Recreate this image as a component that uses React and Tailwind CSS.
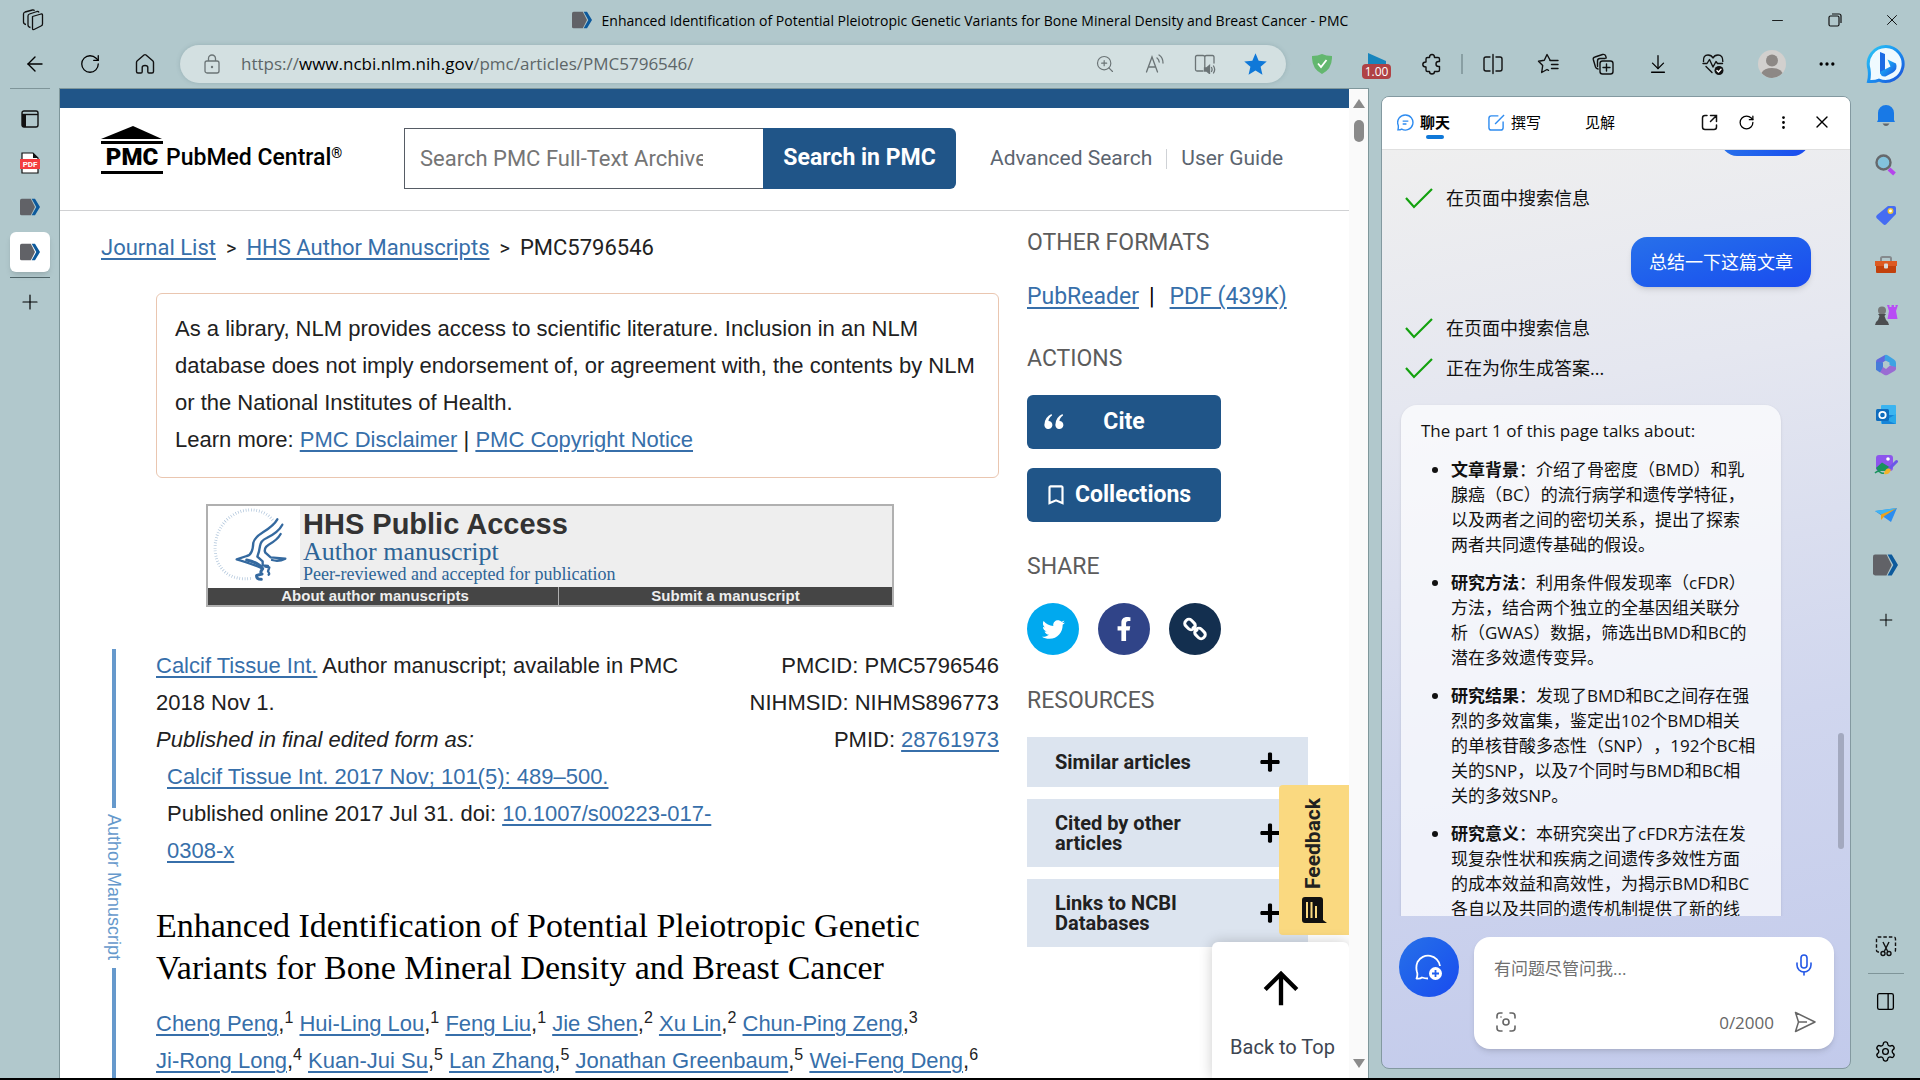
import { useState } from "react";
import {
  ArrowLeft,
  ArrowDownToLine,
  Ellipsis,
  EllipsisVertical,
  Mic,
  Minus,
  PanelRight,
  Plus,
  RotateCw,
  Settings,
  X,
  ZoomIn,
} from "lucide-react";
import { FaFacebookF, FaLink, FaPlus, FaTwitter } from "react-icons/fa";
import { MdArrowUpward, MdBookmarkBorder, MdStar } from "react-icons/md";

const PmcMark = ({ className }) => (
  <svg viewBox="0 0 24 20" className={className} aria-hidden="true">
    <path d="M2 0H13L18 10L13 20H2Q0 20 0 18V2Q0 0 2 0Z" fill="#616267" />
    <path d="M14 0H18L24 10L18 20H14L19.500 10Z" fill="#0d5a9c" />
  </svg>
);

const WorkspacesIcon = () => (
  <svg viewBox="0 0 22 22" className="w-[22px] h-[22px]" fill="none" stroke="#111" strokeWidth="1.300" strokeLinejoin="round">
    <path d="M10.500 7.500L19 5Q20.500 4.700 20.500 6V15Q20.500 16.500 19 17L12 20.500Q10.500 21 10.500 19.500Z" />
    <path d="M8.500 18.500Q6 18 6 16V7Q6 5.500 7.500 5L15 2.500Q16.500 2.200 17 3.500" />
    <path d="M4 15.500Q1.500 15 1.500 13V5Q1.500 3.500 3 3L10.500 1Q12 .800 12.500 1.800" />
  </svg>
);

const HomeIcon = () => (
  <svg viewBox="0 0 22 22" className="w-[22px] h-[22px]" fill="none" stroke="#111" strokeWidth="1.400" strokeLinejoin="round">
    <path d="M2.500 9.500Q2.500 8.500 3.300 7.800L10 2Q11 1.200 12 2L18.700 7.800Q19.500 8.500 19.500 9.500V18.500Q19.500 20 18 20H15Q13.800 20 13.800 18.800V14.500Q13.800 12.500 11 12.500T8.200 14.500V18.800Q8.200 20 7 20H4Q2.500 20 2.500 18.500Z" />
  </svg>
);

const LockIcon = () => (
  <svg viewBox="0 0 18 20" className="w-[18px] h-5" fill="none" stroke="#6b7476" strokeWidth="1.300">
    <rect x="2" y="7" width="14" height="12" rx="2" />
    <path d="M5.500 7V4.500A3.500 3.500 0 0 1 12.500 4.500V7" />
    <circle cx="9" cy="13" r="1.200" fill="#6b7476" stroke="none" />
  </svg>
);

const ReadAloudIcon = () => (
  <svg viewBox="0 0 20 20" className="w-5 h-5" fill="none" stroke="#6b7476" strokeWidth="1.300" strokeLinecap="round">
    <path d="M1.500 18L7 3L12.500 18M3.300 13H10.700" />
    <path d="M12 4Q14 5.500 14.200 8M14 1Q18 3.500 18 9" />
  </svg>
);

const ReaderIcon = () => (
  <svg viewBox="0 0 22 20" className="w-[22px] h-5" fill="none" stroke="#6b7476" strokeWidth="1.300" strokeLinecap="round">
    <path d="M20 9V3Q20 1.500 18.500 1.500H12.500Q10.800 1.500 10.800 3V15M10.800 3Q10.800 1.500 9 1.500H3Q1.500 1.500 1.500 3V15.500Q1.500 17 3 17H9" />
    <path d="M10.500 14H12.500L15.500 11.500V19.500L12.500 17H10.500Z" fill="#6b7476" />
    <path d="M17.500 13.500Q18.700 15.500 17.500 17.500M19.500 12Q21.800 15.500 19.500 19" />
  </svg>
);

const ExtensionsIcon = () => (
  <svg viewBox="0 0 22 22" className="w-[22px] h-[22px]" fill="none" stroke="#111" strokeWidth="1.400" strokeLinejoin="round">
    <path d="M8.500 4.500Q8.500 1.500 11 1.500T13.500 4.500H17Q18.500 4.500 18.500 6V8.500H17.500Q15 8.500 15 11T17.500 13.500H18.500V17Q18.500 18.500 17 18.500H13.500Q13.500 21 11 21T8.500 18.500H6.500Q5 18.500 5 17V14Q1.800 14 1.800 11.500T5 9V6Q5 4.500 6.500 4.500Z" />
  </svg>
);

const SplitIcon = () => (
  <svg viewBox="0 0 22 22" className="w-[22px] h-[22px]" fill="none" stroke="#111" strokeWidth="1.400" strokeLinecap="round">
    <path d="M11 1.500V20.500M8 4H4Q2 4 2 6V16Q2 18 4 18H8M14 4H18Q20 4 20 6V16Q20 18 18 18H14" />
  </svg>
);

const FavoritesIcon = () => (
  <svg viewBox="0 0 22 22" className="w-[22px] h-[22px]" fill="none" stroke="#111" strokeWidth="1.400" strokeLinecap="round" strokeLinejoin="round">
    <path d="M13 7L10 1.500L7.300 7.300L1.500 8.200L5.700 12.500L4.700 19.500L10 16.500L11.500 17.300" />
    <path d="M13 7.500H21M14.500 11.500H21M14.500 15.500H21" />
  </svg>
);

const CollectionsIcon = () => (
  <svg viewBox="0 0 22 22" className="w-[22px] h-[22px]" fill="none" stroke="#111" strokeWidth="1.400" strokeLinecap="round">
    <rect x="8" y="8" width="13" height="13" rx="2.500" />
    <path d="M14.500 11V18M11 14.500H18M6 16Q4 15.500 3.500 14L1.300 6.500Q.900 4.500 3 4L10.500 1.500Q13 1 13.700 3L14.200 5M5.500 13.500V8Q5.500 5.500 8 5.500H13" />
  </svg>
);

const HealthIcon = () => (
  <svg viewBox="0 0 22 22" className="w-[22px] h-[22px]" fill="none" stroke="#111" strokeWidth="1.400" strokeLinecap="round" strokeLinejoin="round">
    <path d="M1.500 8.500Q1 2 6 2Q9.500 2 11 5Q12.500 2 16 2Q21 2 20.800 8.500M4 13.500L10 19.500" />
    <path d="M1 10.500H5L7.500 6.500L11 14L14 8.500L15.500 10.500H20.500" />
    <circle cx="17" cy="17.500" r="4.500" fill="#111" stroke="none" />
    <path d="M15 17.500L16.500 19L19 16.200" stroke="#fff" />
  </svg>
);

const BingIcon = () => (
  <svg viewBox="0 0 40 40" className="w-10 h-10" aria-hidden="true">
    <defs>
      <linearGradient id="bing-ring" x1="0" y1="0" x2="1" y2="1">
        <stop offset="0" stopColor="#2cc7f5" />
        <stop offset=".5" stopColor="#1a90f0" />
        <stop offset="1" stopColor="#1b4fd8" />
      </linearGradient>
    </defs>
    <path d="M20 2.500A17.500 17.500 0 1 1 13 36.200Q9 38 2.500 37.500Q4 32 3 25A17.500 17.500 0 0 1 20 2.500Z" fill="#effaff" stroke="url(#bing-ring)" strokeWidth="3" />
    <path d="M14 8L19 10V26L14 30Z" fill="#1b6be4" />
    <path d="M14 28L24.500 22.500L21.500 15.500L30 19.500Q32 25 27 28.500L19.500 32.500Q14 33 14 27Z" fill="url(#bing-ring)" />
  </svg>
);

const BellIcon = () => (
  <svg viewBox="0 0 22 22" className="w-[22px] h-[22px]">
    <path d="M3 16V9A8 8 0 0 1 19 9V16L20 18H2Z" fill="#1879e6" />
    <path d="M7.500 19.500H14.500Q13 22 11 22T7.500 19.500Z" fill="#62676b" />
  </svg>
);

const SearchIcon = () => (
  <svg viewBox="0 0 22 22" className="w-[22px] h-[22px]">
    <path d="M14 15L19.500 20" stroke="#b545ec" strokeWidth="4" />
    <circle cx="8.500" cy="8.500" r="7" fill="#83c3dc" stroke="#66696c" strokeWidth="2.400" />
  </svg>
);

const TagIcon = () => (
  <svg viewBox="0 0 22 22" className="w-[22px] h-[22px]">
    <path d="M13 2H19Q21 2 21 4V10L11 20.500Q9.500 21.500 8 20L1.500 14Q.500 12.500 2 11Z" fill="#456cf2" />
    <circle cx="15.500" cy="7" r="2.200" fill="#fff" stroke="#f2c534" strokeWidth="1.500" />
  </svg>
);

const ToolboxIcon = () => (
  <svg viewBox="0 0 24 22" className="w-6 h-[22px]">
    <path d="M7 7V4.500Q7 3 8.500 3H15.500Q17 3 17 4.500V7" fill="none" stroke="#858a8d" strokeWidth="2" />
    <path d="M1 7H23V12H1Z" fill="#dd5a22" />
    <path d="M2 12H22V18Q22 19 21 19H3Q2 19 2 18Z" fill="#c2410c" />
    <rect x="10" y="9.500" width="4" height="5" rx="1" fill="#d9dadb" />
  </svg>
);

const ChessIcon = () => (
  <svg viewBox="0 0 24 22" className="w-6 h-[22px]">
    <path d="M13 1H15.500V3H17.500V1H20V3H21.500V1H24L22 7L23.500 15H13.500L15 7Z" fill="#b84df5" />
    <circle cx="8" cy="6.500" r="4" fill="#77797a" />
    <path d="M4 10H12L10.500 12L12 16Q15 18 15 21H1Q1 18 4 16L5.500 12Z" fill="#4c4e50" />
  </svg>
);

const OfficeIcon = () => (
  <svg viewBox="0 0 22 22" className="w-[22px] h-[22px]">
    <path d="M10 1L2 5.500Q1 6 1 8V16L7.500 13V8.500L13 5Z" fill="#6269dd" />
    <path d="M10 1Q11.500 .500 13 1.500L19 5.500Q21 6.500 21 9V14.500L14.500 11V8.500L9.500 6Z" fill="#3ea3e3" />
    <path d="M21 13V15Q21 16 19.500 17L12.500 21Q11 21.700 9.500 21L4 17.500L8 13L11 15L15 11.500Z" fill="#9a6bd3" />
    <path d="M1 8V15Q1 16 2 16.500L5 18.500L8 13V8.500Z" fill="#477bd9" />
  </svg>
);

const OutlookIcon = () => (
  <svg viewBox="0 0 22 22" className="w-[22px] h-[22px]">
    <rect x="6" y="1" width="15" height="19" rx="1" fill="#3bb4f0" />
    <path d="M6 11H21V19Q21 20 20 20H7Z" fill="#1584d8" />
    <path d="M21 10L11 16L21 20Z" fill="#28a8ea" />
    <rect x="1" y="5" width="13" height="12" rx="1.500" fill="#0f6cbd" />
    <circle cx="7.500" cy="11" r="3.200" fill="none" stroke="#fff" strokeWidth="1.800" />
  </svg>
);

const DesignerIcon = () => (
  <svg viewBox="0 0 24 22" className="w-6 h-[22px]">
    <rect x="2" y="1" width="17" height="16" rx="3" fill="#8d55ed" />
    <circle cx="14" cy="5" r="1.800" fill="#fff" />
    <path d="M2 14L8 8.500L17 14L14 17H4Z" fill="#18935d" />
    <path d="M1 19Q4 16 6 18T10 19" fill="none" stroke="#18935d" strokeWidth="1.500" />
    <path d="M22.500 7.500L15 15" stroke="#6b56e8" strokeWidth="3" strokeLinecap="round" />
    <path d="M10 20Q11 14.500 14.500 14.500T16 18Q14 21 10 20Z" fill="#f1b32b" />
  </svg>
);

const DropIcon = () => (
  <svg viewBox="0 0 22 22" className="w-[22px] h-[22px]">
    <path d="M0 7L22 4L16 18L9.500 13.500Z" fill="#2c8df0" />
    <path d="M0 7L22 4L7 11Z" fill="#40b5f2" />
    <path d="M22 4L6 10.500V16L9.500 12Z" fill="#eda21d" />
  </svg>
);

const ScreenshotIcon = () => (
  <svg viewBox="0 0 22 22" className="w-[22px] h-[22px]" fill="none" stroke="#111" strokeWidth="1.400">
    <path d="M4 17H3.500Q1.500 17 1.500 15V4Q1.500 2 3.500 2H18.500Q20.500 2 20.500 4V15Q20.500 17 18.500 17H18" strokeDasharray="3.500 2" />
    <path d="M8 7L13 17M14 7L9 17" />
    <circle cx="8" cy="18.500" r="2" />
    <circle cx="14" cy="18.500" r="2" />
  </svg>
);

const PdfIcon = () => (
  <svg viewBox="0 0 20 22" className="w-5 h-[22px]">
    <path d="M2 1H13L18 6V21H2Z" fill="#fff" stroke="#111" strokeWidth="1.200" />
    <path d="M13 1V6H18" fill="#111" />
    <rect x="0" y="7" width="20" height="10" fill="#f43d40" />
    <text x="10" y="15" textAnchor="middle" fontSize="8" fontWeight="700" fontFamily="Roboto, sans-serif" fill="#fff">
      PDF
    </text>
  </svg>
);

const ImageSearchIcon = () => (
  <svg viewBox="0 0 20 20" className="ml-[2px] h-5 w-5" fill="none" stroke="#666" strokeWidth="1.600" strokeLinecap="round">
    <path d="M1 6V4Q1 1 4 1H6M14 1H16Q19 1 19 4V6M19 14V16Q19 19 16 19H14M6 19H4Q1 19 1 16V14" />
    <circle cx="10" cy="10" r="3" />
    <circle cx="5" cy="5" r=".8" fill="#666" stroke="none" />
  </svg>
);

const SendIcon = () => (
  <svg viewBox="0 0 22 22" className="h-[22px] w-[22px]" fill="none" stroke="#666" strokeWidth="1.500" strokeLinejoin="round">
    <path d="M1.500 1.500L21 11L1.500 20.500L4.500 11ZM4.500 11H13" />
  </svg>
);

const HhsSeal = () => (
  <svg viewBox="24 30 276 246" className="w-[92px] h-[82px] bg-white" fill="none" stroke="#34699f" strokeLinecap="round" strokeLinejoin="round">
    <path d="M218 72C190 34 120 28 76 76C30 126 36 210 90 238C114 250 140 250 158 246" stroke="#a9c0d8" strokeWidth="9" strokeDasharray="2 6" strokeLinecap="butt" />
    <path d="M232 70Q222 88 190 108Q164 124 160 140Q158 178 140 180L110 190Q140 198 184 216" strokeWidth="7" />
    <path d="M247 86Q236 108 200 126Q182 134 180 150Q178 166 172 182L188 196V208L204 210" strokeWidth="7" />
    <path d="M242 114Q232 132 206 146Q190 156 196 170L212 184L256 188Q236 198 216 192" strokeWidth="7" />
    <path d="M140 192Q176 200 188 218Q178 230 186 234L170 238Q168 250 184 250" strokeWidth="9" />
    <path d="M196 212L208 214L204 226Q210 234 206 236" strokeWidth="7" />
  </svg>
);

const PmcLogo = () => (
  <a href="#pmc" className="flex w-[250px] shrink-0 items-center gap-[3px] self-start pt-[18px] text-black">
    <span className="flex w-[62px] flex-col items-center">
      <svg viewBox="0 0 62 18" className="h-[18px] w-[62px]">
        <path d="M0 13L32 0L61 13Z" />
        <rect y="15" width="62" height="3" />
      </svg>
      <span className="text-[24px] font-black leading-[27px]">PMC</span>
      <span className="h-[3px] w-full bg-black" />
    </span>
    <span className="pt-[14px] text-[23px] font-medium leading-[27px] whitespace-nowrap">
      PubMed Central<sup className="text-[14px]">®</sup>
    </span>
  </a>
);

const railApps = [
  { name: "Notifications", Icon: BellIcon },
  { name: "Search", Icon: SearchIcon },
  { name: "Shopping", Icon: TagIcon },
  { name: "Tools", Icon: ToolboxIcon },
  { name: "Games", Icon: ChessIcon },
  { name: "Microsoft 365", Icon: OfficeIcon },
  { name: "Outlook", Icon: OutlookIcon },
  { name: "Image Creator", Icon: DesignerIcon },
  { name: "Drop", Icon: DropIcon },
];

const authorLines = [
  [["Cheng Peng", 1], ["Hui-Ling Lou", 1], ["Feng Liu", 1], ["Jie Shen", 2], ["Xu Lin", 2], ["Chun-Ping Zeng", 3]],
  [["Ji-Rong Long", 4], ["Kuan-Jui Su", 5], ["Lan Zhang", 5], ["Jonathan Greenbaum", 5], ["Wei-Feng Deng", 6]],
];

const resources = [
  ["Similar articles"],
  ["Cited by other", "articles"],
  ["Links to NCBI", "Databases"],
];

const summary = [
  {
    title: "文章背景",
    lines: ["：介绍了骨密度（BMD）和乳", "腺癌（BC）的流行病学和遗传学特征，", "以及两者之间的密切关系，提出了探索", "两者共同遗传基础的假设。"],
  },
  {
    title: "研究方法",
    lines: ["：利用条件假发现率（cFDR）", "方法，结合两个独立的全基因组关联分", "析（GWAS）数据，筛选出BMD和BC的", "潜在多效遗传变异。"],
  },
  {
    title: "研究结果",
    lines: ["：发现了BMD和BC之间存在强", "烈的多效富集，鉴定出102个BMD相关", "的单核苷酸多态性（SNP），192个BC相", "关的SNP，以及7个同时与BMD和BC相", "关的多效SNP。"],
  },
  {
    title: "研究意义",
    lines: ["：本研究突出了cFDR方法在发", "现复杂性状和疾病之间遗传多效性方面", "的成本效益和高效性，为揭示BMD和BC", "各自以及共同的遗传机制提供了新的线"],
  },
];

const ToolButton = ({ label, children }) => (
  <button aria-label={label} className="flex h-10 w-[55px] shrink-0 items-center justify-center">
    {children}
  </button>
);

const Link = ({ children }) => (
  <a href="#link" className="text-[#376faa] underline decoration-2 underline-offset-[3px]">
    {children}
  </a>
);

const TitleBar = () => (
  <div className="flex h-10 shrink-0 items-center">
    <div className="flex w-[171px] pl-[22px]">
      <WorkspacesIcon />
    </div>
    <div className="flex flex-1 items-center justify-center gap-[10px]">
      <PmcMark className="h-[18px] w-5" />
      <span className="text-[14px] text-black whitespace-nowrap">
        Enhanced Identification of Potential Pleiotropic Genetic Variants for Bone Mineral Density and Breast Cancer - PMC
      </span>
    </div>
    <button aria-label="Minimize" className="flex w-[57px] justify-center">
      <Minus size={17} strokeWidth={1.2} />
    </button>
    <button aria-label="Restore" className="flex w-[57px] justify-center">
      <svg viewBox="0 0 14 14" className="h-[14px] w-[14px]" fill="none" stroke="#111" strokeWidth="1.200">
        <rect x="1" y="3" width="10" height="10" rx="1.500" />
        <path d="M4 1H11Q13 1 13 3V10" />
      </svg>
    </button>
    <button aria-label="Close" className="flex w-[57px] justify-center">
      <X size={18} strokeWidth={1.2} />
    </button>
  </div>
);

const Toolbar = () => (
  <div className="flex h-12 shrink-0 items-center pl-[7px]">
    <ToolButton label="Back"><ArrowLeft size={24} strokeWidth={1.4} /></ToolButton>
    <ToolButton label="Refresh"><RotateCw size={22} strokeWidth={1.4} /></ToolButton>
    <ToolButton label="Home"><HomeIcon /></ToolButton>
    <div className="ml-2 mr-2 flex h-[38px] flex-1 items-center rounded-full bg-[#d3e0e1] pl-[23px] pr-[6px] text-[#6b7476] shadow-[0_0_4px_rgba(90,120,125,0.3)]">
      <LockIcon />
      <div role="textbox" aria-label="Address" className="flex-1 pl-5 text-[17px] text-[#5d6668] whitespace-nowrap">
        https://<span className="text-black">www.ncbi.nlm.nih.gov</span>/pmc/articles/PMC5796546/
      </div>
      <button aria-label="Zoom" className="flex w-[50px] justify-center"><ZoomIn size={20} strokeWidth={1.4} /></button>
      <button aria-label="Read aloud" className="flex w-[50px] justify-center"><ReadAloudIcon /></button>
      <button aria-label="Immersive reader" className="flex w-[50px] justify-center"><ReaderIcon /></button>
      <button aria-label="Favorite" className="flex w-[50px] justify-center"><MdStar size={27} color="#0f78d8" /></button>
    </div>
    <ToolButton label="Ad blocker">
      <svg viewBox="0 0 20 20" className="h-5 w-5">
        <path d="M10 0Q14 2 20 2Q20.500 15 10 20Q-.500 15 0 2Q6 2 10 0Z" fill="#63b76f" />
        <path d="M6 9.500L9 13L14.500 6" fill="none" stroke="#fff" strokeWidth="1.800" />
      </svg>
    </ToolButton>
    <ToolButton label="Video speed">
      <span className="flex flex-col items-center">
        <svg viewBox="0 0 18 11" className="mt-1 h-[11px] w-[18px]"><path d="M0 0L18 8V11H0Z" fill="#1785bd" /></svg>
        <span className="rounded-sm bg-[#b04245] px-[3px] text-[12px] leading-[15px] text-white">1.00</span>
      </span>
    </ToolButton>
    <ToolButton label="Extensions"><ExtensionsIcon /></ToolButton>
    <span className="mx-[2px] h-5 w-[2px] bg-[#899fa3]" />
    <ToolButton label="Split screen"><SplitIcon /></ToolButton>
    <ToolButton label="Favorites"><FavoritesIcon /></ToolButton>
    <ToolButton label="Collections"><CollectionsIcon /></ToolButton>
    <ToolButton label="Downloads"><ArrowDownToLine size={22} strokeWidth={1.4} /></ToolButton>
    <ToolButton label="Browser essentials"><HealthIcon /></ToolButton>
    <div className="flex w-[112px] shrink-0 items-center justify-around pl-[2px]">
      <button aria-label="Profile">
        <svg viewBox="0 0 28 28" className="h-7 w-7">
          <circle cx="14" cy="14" r="14" fill="#d2d0ce" />
          <circle cx="14" cy="10.500" r="6" fill="#8d8885" />
          <path d="M3.500 23Q6 18 14 18T24.500 23Q20 28 14 28T3.500 23Z" fill="#8d8885" />
        </svg>
      </button>
      <button aria-label="More"><Ellipsis size={20} strokeWidth={2} /></button>
    </div>
    <button aria-label="Bing Chat" className="flex w-[68px] shrink-0 justify-center"><BingIcon /></button>
  </div>
);

const TabRail = () => (
  <nav className="flex w-[59px] shrink-0 flex-col items-center">
    <span className="h-px w-10 bg-[#7f9599]" />
    <button aria-label="Tab list" className="mt-2 flex h-11 items-center">
      <svg viewBox="0 0 18 18" className="h-[18px] w-[18px]" fill="none" stroke="#111" strokeWidth="1.400">
        <rect x="1" y="1" width="16" height="16" rx="2" />
        <path d="M1 4.500H17" />
        <rect x="1" y="5" width="4" height="12" fill="#111" stroke="none" />
      </svg>
    </button>
    <button aria-label="PDF tab" className="flex h-11 items-center"><PdfIcon /></button>
    <button aria-label="PMC tab" className="flex h-11 items-center"><PmcMark className="h-[18px] w-5" /></button>
    <button aria-label="Current tab" className="mt-[3px] flex h-10 w-10 items-center justify-center rounded-md bg-white shadow-md">
      <PmcMark className="h-[18px] w-5" />
    </button>
    <span className="mt-[5px] h-px w-10 bg-[#4f6468]" />
    <button aria-label="New tab" className="mt-3 flex"><Plus size={24} strokeWidth={1.2} /></button>
  </nav>
);

const PageHeader = () => (
  <header className="flex h-[103px] shrink-0 items-center border-b border-[#d0d1d3] pb-[2px] pl-[41px] font-[Roboto,sans-serif]">
    <PmcLogo />
    <form className="ml-[53px] flex h-[61px]" onSubmit={(e) => e.preventDefault()}>
      <input
        aria-label="Search PMC"
        placeholder="Search PMC Full-Text Archive"
        className="w-[359px] border border-r-0 border-[#565c65] pl-[15px] pr-[60px] text-[22px] placeholder-[#757575] outline-none"
      />
      <button className="w-[193px] rounded-r-md bg-[#205588] text-[23px] font-bold text-white">Search in PMC</button>
    </form>
    <div className="ml-[34px] flex items-center pt-[2px] text-[21px] text-[#5c6570] whitespace-nowrap">
      <a href="#advanced">Advanced Search</a>
      <span className="mx-[14px] h-5 w-px bg-[#cfd2d6]" />
      <a href="#guide">User Guide</a>
    </div>
  </header>
);

const Banner = () => (
  <div className="ml-[146px] mr-[105px] mt-[26px] h-[103px] border-2 border-[#b0b0b0] bg-[#eee]">
    <div className="flex h-[81px]">
      <HhsSeal />
      <div className="pl-[3px] text-[#2d6496] whitespace-nowrap">
        <div className="pt-[2px] font-[Liberation_Sans,sans-serif] text-[29px] font-bold leading-[32px] text-[#333]">HHS Public Access</div>
        <div className="font-[Liberation_Serif,serif] text-[26px] leading-[24px]">Author manuscript</div>
        <div className="font-[Liberation_Serif,serif] text-[18px] leading-[20px]">Peer-reviewed and accepted for publication</div>
      </div>
    </div>
    <div className="flex h-[18px] bg-[#454545] text-center font-[Liberation_Sans,sans-serif] text-[15px] font-bold leading-[18px] text-[#eee]">
      <a href="#about" className="w-[351px] border-r border-[#b0b0b0] pr-4">About author manuscripts</a>
      <a href="#submit" className="flex-1">Submit a manuscript</a>
    </div>
  </div>
);

const Article = () => (
  <main className="min-w-0 flex-1 font-[Liberation_Sans,sans-serif] text-[22px] leading-[37px] text-[#212121]">
    <nav className="pl-[41px] pt-[18px] font-[Roboto,sans-serif]">
      <Link>Journal List</Link>
      <span className="mx-[10px] text-[20px]">&gt;</span>
      <Link>HHS Author Manuscripts</Link>
      <span className="mx-[10px] text-[20px]">&gt;</span>
      PMC5796546
    </nav>
    <div className="ml-24 mt-[26px] h-[185px] rounded-md border border-[#eac6b0] px-[18px] pt-4 whitespace-nowrap">
      <p>As a library, NLM provides access to scientific literature. Inclusion in an NLM</p>
      <p>database does not imply endorsement of, or agreement with, the contents by NLM</p>
      <p>or the National Institutes of Health.</p>
      <p>
        Learn more: <Link>PMC Disclaimer</Link> | <Link>PMC Copyright Notice</Link>
      </p>
    </div>
    <Banner />
    <div className="mt-[42px] flex">
      <div className="flex w-24 shrink-0 flex-col items-center pl-[12px] text-[#6699cc]">
        <span className="h-[159px] w-1 shrink-0 bg-[#6699cc]" />
        <span className="pb-2 pt-[6px] text-[18px] leading-5 whitespace-nowrap [writing-mode:vertical-rl]">Author Manuscript</span>
        <span className="w-1 flex-1 bg-[#6699cc]" />
      </div>
      <div className="-mt-[2px] min-w-0 flex-1">
        <div className="flex justify-between whitespace-nowrap">
          <div>
            <p><Link>Calcif Tissue Int.</Link> Author manuscript; available in PMC</p>
            <p>2018 Nov 1.</p>
            <p className="italic">Published in final edited form as:</p>
            <p className="pl-[11px]"><Link>Calcif Tissue Int. 2017 Nov; 101(5): 489–500.</Link></p>
            <p className="pl-[11px]">Published online 2017 Jul 31. doi: <Link>10.1007/s00223-017-</Link></p>
            <p className="pl-[11px]"><Link>0308-x</Link></p>
          </div>
          <div className="text-right">
            <p>PMCID: PMC5796546</p>
            <p>NIHMSID: NIHMS896773</p>
            <p>PMID: <Link>28761973</Link></p>
          </div>
        </div>
        <h1 className="mt-9 font-[Liberation_Serif,serif] text-[34px] leading-[42px] text-black whitespace-nowrap">
          Enhanced Identification of Potential Pleiotropic Genetic
          <br />
          Variants for Bone Mineral Density and Breast Cancer
        </h1>
        <div className="mt-4 whitespace-nowrap">
          {authorLines.map((line, i) => (
            <p key={i}>
              {line.map(([name, ref]) => (
                <span key={name}>
                  <Link>{name}</Link>,<sup className="text-[16px]">{ref}</sup>{" "}
                </span>
              ))}
            </p>
          ))}
        </div>
      </div>
    </div>
  </main>
);

const SideHeading = ({ children }) => (
  <h2 className="text-[23px] leading-6 text-[#5c5c5c]">{children}</h2>
);

const ArticleAside = () => (
  <aside className="w-[350px] shrink-0 pl-7 pt-5 font-[Roboto,sans-serif]">
    <SideHeading>OTHER FORMATS</SideHeading>
    <p className="mt-7 text-[23px] leading-[28px] whitespace-nowrap">
      <Link>PubReader</Link>
      <span className="ml-[10px] mr-[15px]">|</span>
      <Link>PDF (439K)</Link>
    </p>
    <div className="mt-9"><SideHeading>ACTIONS</SideHeading></div>
    <button className="mt-6 flex h-[54px] w-[194px] items-center rounded-md bg-[#205588] text-[23px] font-bold text-white">
      <svg viewBox="0 0 20 16" className="ml-[17px] h-4 w-5" fill="#fff">
        <path d="M7.500 0Q1 3 .500 10A4 4 0 1 0 4.500 7Q4.500 4 8 1.500ZM18.500 0Q12 3 11.500 10A4 4 0 1 0 15.500 7Q15.500 4 19 1.500Z" />
      </svg>
      <span className="flex-1 pr-[37px] text-center">Cite</span>
    </button>
    <button className="mt-[19px] flex h-[54px] w-[194px] items-center rounded-md bg-[#205588] pl-4 text-[23px] font-bold text-white">
      <MdBookmarkBorder size={26} />
      <span className="pl-[6px]">Collections</span>
    </button>
    <div className="mt-[33px]"><SideHeading>SHARE</SideHeading></div>
    <div className="mt-6 flex gap-[19px] text-white">
      <a href="#twitter" aria-label="Twitter" className="flex h-[52px] w-[52px] items-center justify-center rounded-full bg-[#00a9ef]"><FaTwitter size={23} /></a>
      <a href="#facebook" aria-label="Facebook" className="flex h-[52px] w-[52px] items-center justify-center rounded-full bg-[#304488]"><FaFacebookF size={24} /></a>
      <a href="#permalink" aria-label="Permalink" className="flex h-[52px] w-[52px] items-center justify-center rounded-full bg-[#132f4f]">
        <svg viewBox="0 0 26 26" className="h-[26px] w-[26px]" fill="none" stroke="#fff" strokeWidth="3">
          <rect x="2.500" y="4.500" width="11" height="8" rx="3.500" transform="rotate(45 8 8.500)" />
          <rect x="12.500" y="13.500" width="11" height="8" rx="3.500" transform="rotate(45 18 17.500)" />
          <path d="M10.500 10.500L15.500 15.500" />
        </svg>
      </a>
    </div>
    <div className="mt-[34px]"><SideHeading>RESOURCES</SideHeading></div>
    <div className="mt-6 flex w-[281px] flex-col gap-3">
      {resources.map((lines) => (
        <button key={lines[0]} className="flex items-center justify-between bg-[#dce4ef] py-[14px] pl-7 pr-[27px] text-left text-[20px] font-bold leading-5 text-[#212121]">
          <span>
            {lines.map((line) => (
              <span key={line} className="block">{line}</span>
            ))}
          </span>
          <FaPlus size={22} color="#000" />
        </button>
      ))}
    </div>
  </aside>
);

const WebPage = () => (
  <section className="flex min-w-0 flex-1 border-l border-r border-t border-[#7f979b] bg-white">
    <div className="relative flex min-w-0 flex-1 flex-col overflow-hidden">
      <div className="h-[19px] shrink-0 bg-[#205588]" />
      <PageHeader />
      <div className="flex">
        <Article />
        <ArticleAside />
      </div>
      <button className="absolute bottom-[143px] right-0 flex h-[150px] w-[70px] rotate-180 items-center gap-2 rounded-r-sm bg-[#fad980] pt-3 font-[Roboto,sans-serif] text-[21px] font-bold text-[#212121] [writing-mode:vertical-rl]">
        <svg viewBox="0 0 26 26" className="h-[26px] w-[26px] shrink-0 rotate-180">
          <path d="M4 0H19Q22 0 22 3V23L26 26H4Q1 26 1 23V3Q1 0 4 0Z" fill="#111" />
          <path d="M6 5V21M10.500 5V21M15 9V21" stroke="#fad980" strokeWidth="2" />
        </svg>
        Feedback
      </button>
      <button className="absolute bottom-0 right-0 flex h-[136px] w-[137px] flex-col items-center rounded-t-md bg-white pt-5 font-[Roboto,sans-serif] text-[20px] text-[#3d4551] shadow-[0_0_14px_rgba(0,0,0,0.2)]">
        <MdArrowUpward size={52} color="#000" />
        <span className="mt-[18px] pl-1">Back to Top</span>
      </button>
    </div>
    <div className="flex w-[19px] shrink-0 flex-col items-center bg-[#fafafa] py-[10px]">
      <svg viewBox="0 0 12 9" className="h-[9px] w-3"><path d="M6 0L12 9H0Z" fill="#8a8a8a" /></svg>
      <span className="mt-3 h-[22px] w-[10px] rounded-full bg-[#8a8a8a]" />
      <svg viewBox="0 0 12 9" className="mt-auto h-[9px] w-3"><path d="M6 9L12 0H0Z" fill="#8a8a8a" /></svg>
    </div>
  </section>
);

const StatusRow = ({ children }) => (
  <div className="flex h-10 items-center gap-3 pl-[22px] text-[18px]">
    <svg viewBox="0 0 30 22" className="h-[22px] w-[30px]" fill="none" stroke="#13a10e" strokeWidth="2.200">
      <path d="M2 11L10 20L28 2" />
    </svg>
    {children}
  </div>
);

const ChatHeader = () => {
  const [tab, setTab] = useState("chat");

  return (
    <header className="flex h-[53px] shrink-0 items-start border-b border-[#e0e0e0] bg-white pl-[15px] pt-3 text-[15px] leading-[26px] text-black">
      <button onClick={() => setTab("chat")} className="flex w-[91px] gap-[6px] font-bold">
        <svg viewBox="0 0 18 18" className="mt-[5px] h-[17px] w-[17px]" fill="none" stroke="#2f8cf0" strokeWidth="1.500">
          <path d="M9 1A8 8 0 1 1 5 16Q3 17 1 16.800Q1.700 14.500 1.300 12A8 8 0 0 1 9 1ZM6 7.500H12M6 10.500H10" />
        </svg>
        <span>
          聊天
          {tab === "chat" && <span className="mx-auto block h-1 w-[18px] rounded-sm bg-[#0f78d8]" />}
        </span>
      </button>
      <button onClick={() => setTab("compose")} className="flex w-[97px] gap-[6px]">
        <svg viewBox="0 0 18 18" className="mt-[5px] h-[17px] w-[17px]" fill="none" stroke="#2f8cf0" strokeWidth="1.500">
          <path d="M11 2H3.500Q1 2 1 4.500V14.500Q1 17 3.500 17H13.500Q16 17 16 14.500V8M7.500 10.500L17 1" />
        </svg>
        撰写
      </button>
      <button onClick={() => setTab("insights")}>见解</button>
      <div className="ml-auto mr-[18px] flex h-[26px] items-center gap-5">
        <button aria-label="Open in new tab">
          <svg viewBox="0 0 17 17" className="h-[17px] w-[17px]" fill="none" stroke="#111" strokeWidth="1.500" strokeLinecap="round">
            <path d="M6 1.500H4Q1.500 1.500 1.500 4V13Q1.500 15.500 4 15.500H13Q15.500 15.500 15.500 13V11M9.500 1.500H15.500V7.500M15 2L9.500 7.500" />
          </svg>
        </button>
        <button aria-label="Reload"><RotateCw size={17} strokeWidth={1.8} /></button>
        <button aria-label="More options"><EllipsisVertical size={17} strokeWidth={2} /></button>
        <button aria-label="Close panel"><X size={20} strokeWidth={1.6} /></button>
      </div>
    </header>
  );
};

const Chat = () => {
  const [message, setMessage] = useState("");

  return (
    <section className="mb-[9px] ml-3 mt-2 flex w-[470px] shrink-0 flex-col overflow-hidden rounded-lg border border-[#8399a0] bg-[linear-gradient(170deg,#efefef_5%,#e5e7f0_30%,#d0d6ee_65%,#c2caeb_100%)] text-[#111]">
      <ChatHeader />
      <div className="relative min-h-0 flex-1 overflow-hidden">
        <div className="-mt-[42px] ml-auto mr-[41px] h-12 w-[88px] rounded-2xl bg-gradient-to-r from-[#2870ea] to-[#1b4aef]" />
        <div className="mt-[22px]"><StatusRow>在页面中搜索信息</StatusRow></div>
        <div className="ml-auto mr-[39px] mt-[19px] h-[50px] w-[180px] rounded-2xl bg-gradient-to-br from-[#2870ea] to-[#1b4aef] text-center text-[18px] leading-[50px] text-white shadow-md">
          总结一下这篇文章
        </div>
        <div className="mt-[21px]"><StatusRow>在页面中搜索信息</StatusRow></div>
        <StatusRow>正在为你生成答案...</StatusRow>
        <div className="ml-[19px] mt-[17px] w-[380px] rounded-2xl bg-white/70 pb-4 pl-5 pt-[13px] text-[17px] leading-[25px] shadow-sm [text-spacing-trim:space-all]">
          <p>The part 1 of this page talks about:</p>
          <ul className="mt-[14px] flex list-disc flex-col gap-[13px] pl-[30px] whitespace-nowrap">
            {summary.map(({ title, lines }) => (
              <li key={title}>
                <strong>{title}</strong>
                {lines.map((line, i) => (
                  <span key={line}>
                    {i > 0 && <br />}
                    {line}
                  </span>
                ))}
              </li>
            ))}
          </ul>
        </div>
        <span className="absolute right-[6px] top-[583px] h-[116px] w-[6px] rounded-full bg-[#a3a9bf]" />
      </div>
      <div className="flex shrink-0 items-start gap-[15px] pb-[19px] pl-[17px] pr-4 pt-[21px]">
        <button aria-label="New topic" className="flex h-[60px] w-[60px] shrink-0 items-center justify-center rounded-full bg-gradient-to-br from-[#2870e8] to-[#1b4aef]">
          <svg viewBox="0 0 28 28" className="h-7 w-7" fill="none" stroke="#fff" strokeWidth="1.800" strokeLinejoin="round">
            <path d="M13 25.500Q10 25.500 7 24.500Q5 26 1.500 25.500Q3 22 2 19Q.500 14 2.500 9A12 12 0 0 1 25 13" />
            <circle cx="20.500" cy="20.500" r="6.500" fill="#fff" stroke="none" />
            <path d="M20.500 17V24M17 20.500H24" stroke="#2060ee" />
          </svg>
        </button>
        <div className="flex h-[112px] flex-1 flex-col rounded-2xl bg-white pb-[14px] pl-5 pr-[18px] pt-4 shadow-md">
          <div className="flex flex-1 items-start">
            <textarea
              aria-label="有问题尽管问我"
              placeholder="有问题尽管问我..."
              value={message}
              maxLength={2000}
              onChange={(e) => setMessage(e.target.value)}
              className="h-[34px] flex-1 resize-none text-[17px] leading-8 placeholder-[#707070] outline-none"
            />
            <button aria-label="Voice input"><Mic size={24} strokeWidth={1.6} color="#2458e6" /></button>
          </div>
          <div className="flex items-center text-[#666]">
            <button aria-label="Add image"><ImageSearchIcon /></button>
            <span className="ml-auto mr-5 text-[17px]">{message.length}/2000</span>
            <button aria-label="Send"><SendIcon /></button>
          </div>
        </div>
      </div>
    </section>
  );
};

const SideRail = () => (
  <nav className="flex w-[69px] shrink-0 flex-col items-center pt-[2px]">
    {railApps.map(({ name, Icon }) => (
      <button key={name} aria-label={name} className="flex h-[50px] w-full items-center justify-center">
        <Icon />
      </button>
    ))}
    <button aria-label="PMC" className="flex h-[50px] items-center"><PmcMark className="h-[22px] w-[25px]" /></button>
    <button aria-label="Customize" className="mt-5 flex"><Plus size={20} strokeWidth={1.2} /></button>
    <div className="mt-auto flex flex-col items-center">
      <button aria-label="Screenshot" className="flex h-[54px] items-center"><ScreenshotIcon /></button>
      <span className="mb-1 h-px w-9 bg-[#7f9599]" />
      <button aria-label="Toggle sidebar" className="flex h-[46px] items-center"><PanelRight size={21} strokeWidth={1.5} /></button>
      <button aria-label="Settings" className="flex h-[54px] items-center"><Settings size={23} strokeWidth={1.4} /></button>
    </div>
  </nav>
);

export default function App() {
  return (
    <div className="flex h-screen flex-col overflow-hidden border-b-2 border-black bg-[#b1c8cc] font-[Open_Sans,Noto_Sans_CJK_SC,sans-serif]">
      <TitleBar />
      <Toolbar />
      <div className="flex min-h-0 flex-1">
        <TabRail />
        <WebPage />
        <Chat />
        <SideRail />
      </div>
    </div>
  );
}
